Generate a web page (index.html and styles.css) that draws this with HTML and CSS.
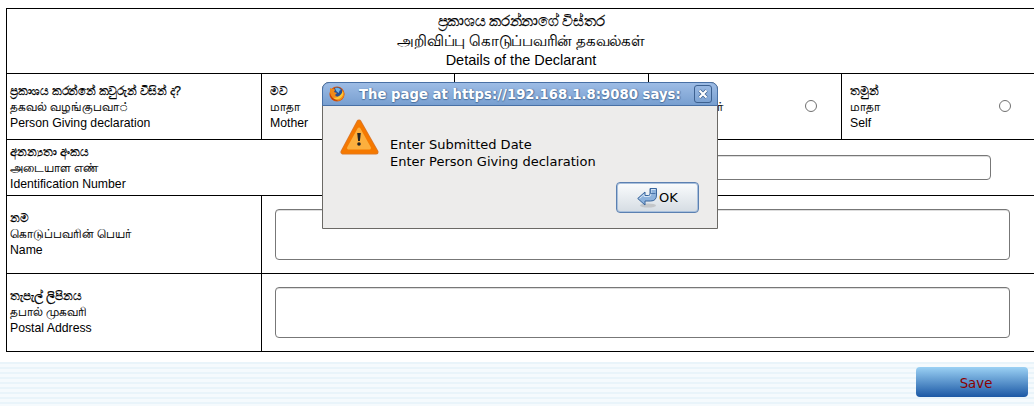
FILE: index.html
```html
<!DOCTYPE html>
<html lang="en">
<head>
<meta charset="utf-8">
<title>Birth declaration</title>
<link rel="stylesheet" href="styles.css">
</head>
<body>
<main class="form">
  <header class="form-title">
    <span class="si">ප්‍රකාශය කරන්නාගේ විස්තර</span>
    <span class="ta">அறிவிப்பு கொடுப்பவரின் தகவல்கள்</span>
    <span class="en">Details of the Declarant</span>
  </header>
  <div class="row row-person">
    <div class="cell label"><span class="si si-tight">ප්‍රකාශය කරන්නේ කවුරුන් විසින් ද?</span><span class="ta">தகவல் வழங்குபவா◌்</span><span class="en">Person Giving declaration</span></div>
    <div class="cell choice"><div class="label"><span class="si">මව</span><span class="ta">மாதா</span><span class="en">Mother</span></div></div>
    <div class="cell choice"></div>
    <div class="cell choice"><div class="label"><span class="ta">பாதுகாவலர்</span></div><i class="radio"></i></div>
    <div class="cell choice"><div class="label"><span class="si">තමුන්</span><span class="ta">மாதா</span><span class="en">Self</span></div><i class="radio radio-last"></i></div>
  </div>
  <div class="row row-id">
    <div class="cell label"><span class="si">අනන්‍යතා අංකය</span><span class="ta">அடையாள எண்</span><span class="en">Identification Number</span></div>
    <div class="cell"><div class="field field-id"></div></div>
  </div>
  <div class="row row-area">
    <div class="cell label"><span class="si">නම</span><span class="ta">கொடுப்பவரின் பெயர்</span><span class="en">Name</span></div>
    <div class="cell"><div class="field"></div></div>
  </div>
  <div class="row row-area">
    <div class="cell label"><span class="si">තැපැල් ලිපිනය</span><span class="ta">தபால் முகவரி</span><span class="en">Postal Address</span></div>
    <div class="cell"><div class="field"></div></div>
  </div>
</main>
<footer class="actions"><button class="save">Save</button></footer>

<section class="dialog">
  <div class="titlebar">
    <svg class="firefox" viewBox="0 0 16 16"><circle cx="8" cy="8" r="7.6" fill="#d9540b"/><circle cx="8.500" cy="6.500" r="5.200" fill="#284f91"/><path d="M6 2q4-1 6 2-2 0-2 3Q7 6 6 2" fill="#6fb5e8"/><path d="M1 2l2 1q2-1 3 1L5 6l3 1-2 2q2 3 5 1 3-2 2-6 3 2 2 6-2 5-7 5Q0 14 1 2" fill="#f08a18"/><path d="M14 5q1 6-4 8-3 1-6-1 7 0 10-7" fill="#fcc737"/><path d="M1 7q0 7 7 8 4 0 6-3-3 4-7 2Q2 12 1 7" fill="#b8380a"/></svg>
    <span class="caption">The page at https://192.168.1.8:9080 says:</span>
    <span class="close"><svg viewBox="0 0 10 10"><path d="M1.5 1.5l7 7m0-7l-7 7" stroke="#3d6190" stroke-width="3.6"/><path d="M1.5 1.5l7 7m0-7l-7 7" stroke="#fff" stroke-width="2.2"/></svg></span>
  </div>
  <div class="message">
    <svg class="warning" viewBox="0 0 40 39"><path d="M19 4L3 34h33z" fill="#f57900" stroke="#d9782f" stroke-width="5" stroke-linejoin="round"/><path d="M19 4L3 34h33z" fill="#f57900" stroke="#f57900" stroke-width="3.500" stroke-linejoin="round"/><path d="M19 11L8.500 30h21z" fill="#fcaf3e" stroke="#fcaf3e" stroke-width="3" stroke-linejoin="round"/><path d="M17.200 15h3.600l-.9 8h-1.800z" fill="#222"/><circle cx="19" cy="26" r="1.800" fill="#222"/></svg>
    <p>Enter Submitted Date<br>Enter Person Giving declaration</p>
  </div>
  <button class="ok"><svg viewBox="0 0 20 20"><ellipse cx="11" cy="17.500" rx="8" ry="2" fill="#aaa" opacity=".5"/><path d="M.7 10.500L8 4V7.500h3.500q1.500 0 1.500-1.500V.5h6.500V7q0 6-6 6H8v4z" fill="#8db2dc" stroke="#39659c"/><path d="M2.500 10.500L7 6.500v2h5q2 0 2-3V1.500h4.500" fill="none" stroke="#d5e5f5"/><path d="M13.500 1v4.500h5" fill="none" stroke="#39659c" stroke-width=".8"/></svg><span>OK</span></button>
</section>
</body>
</html>
```
FILE: styles.css
```css
* { box-sizing: border-box; }
body { margin: 0; width: 1034px; height: 406px; overflow: hidden; background: #fff; color: #000; font-family: "Liberation Sans", sans-serif; }
.form { margin: 8px 0 0 6px; width: 1034px; border: 1px solid #000; height: 344px; }
.form-title { height: 65px; border-bottom: 1px solid #000; padding-top: 3px; display: flex; flex-direction: column; align-items: center; font-size: 14.5px; line-height: 19px; padding-right: 4px; }
.form-title .si { letter-spacing: -.3px; }
.form-title .ta { font-size: 14.8px; line-height: 20px; letter-spacing: -.25px; }
.si { -webkit-text-stroke: .25px #000; }
.ta { -webkit-text-stroke: .15px #000; }
.si-tight { letter-spacing: -.3px; }
.row { display: grid; grid-template-columns: 255px 1fr; border-bottom: 1px solid #000; }
.row:last-child { border-bottom: 0; }
.cell { border-left: 1px solid #000; min-width: 0; }
.cell:first-child { border-left: 0; }
.row-person { height: 66px; grid-template-columns: 254px 193px 194px 193px 1fr; }
.row-id { height: 56px; }
.row-id .cell { border-left: 0; }
.row-area { height: 78px; grid-template-columns: 254px 1fr; }
.label { display: flex; flex-direction: column; justify-content: center; padding-left: 3px; font-size: 12px; line-height: 16px; white-space: nowrap; }
.label .en { font-size: 12.25px; }
.row-area .label { padding-bottom: 2px; }
.choice { display: flex; justify-content: space-between; align-items: center; }
.choice .label { padding-left: 8px; }
.radio { width: 12px; height: 12px; border: 1px solid #707070; border-radius: 50%; margin: 0 24px 2px 0; }
.radio-last { margin-right: 28px; }
.field { margin: 13px 0 0 13px; width: 735px; height: 51px; border: 1px solid #777; border-radius: 4px; box-shadow: inset 0 1px #ddd; }
.field-id { margin: 15px 0 0 74px; width: 655px; height: 25px; }
.actions { margin-top: 10px; height: 44px; background: repeating-linear-gradient(#e9f4fa 0 2px, #f5fafd 2px 5px); padding: 5px 6px 0 0; display: flex; justify-content: flex-end; align-items: flex-start; }
.save { width: 112px; height: 30px; border: 0; border-radius: 4px; padding: 3px 0 0 8px; background: linear-gradient(#9bd1f4, #1b58a5); color: #8b0000; font: 13.33px "DejaVu Sans", sans-serif; }
.dialog { position: absolute; left: 322px; top: 82px; width: 396px; height: 147px; background: #edeceb; border: 1px solid #6b6965; border-radius: 7px 7px 0 0; font-family: "DejaVu Sans", sans-serif; }
.titlebar { margin: -1px -1px 0; height: 24px; display: flex; align-items: center; border: 1px solid #4870a5; border-radius: 7px 7px 0 0; background: linear-gradient(#9dbce5, #789fd0); padding: 0 5px 0 6px; }
.firefox { width: 16px; height: 16px; }
.caption { flex: 1; margin-left: 14px; font-size: 13.25px; font-weight: bold; color: #fff; text-shadow: 0 1px 1px #49719f, 1px 0 1px #49719f; white-space: nowrap; }
.close { width: 18px; height: 18px; border: 1px solid #3d6190; border-radius: 3px; display: grid; place-items: center; }
.close svg { width: 10px; height: 10px; }
.message { display: flex; padding: 12px 0 0 17px; height: 90px; font-size: 13px; line-height: 17px; }
.warning { width: 40px; height: 39px; }
.message p { margin: 18px 0 0 10px; }
.ok { position: absolute; left: 293px; top: 99px; width: 83px; height: 31px; border: 1px solid #5b80b1; box-shadow: inset 0 0 0 1px #a9c0dc; border-radius: 4px; background: linear-gradient(#fafcfd, #d5dce3); display: flex; align-items: center; justify-content: center; gap: 2px; padding: 0; color: #000; font: 13px "DejaVu Sans", sans-serif; }
.ok svg { width: 20px; height: 20px; }
```
